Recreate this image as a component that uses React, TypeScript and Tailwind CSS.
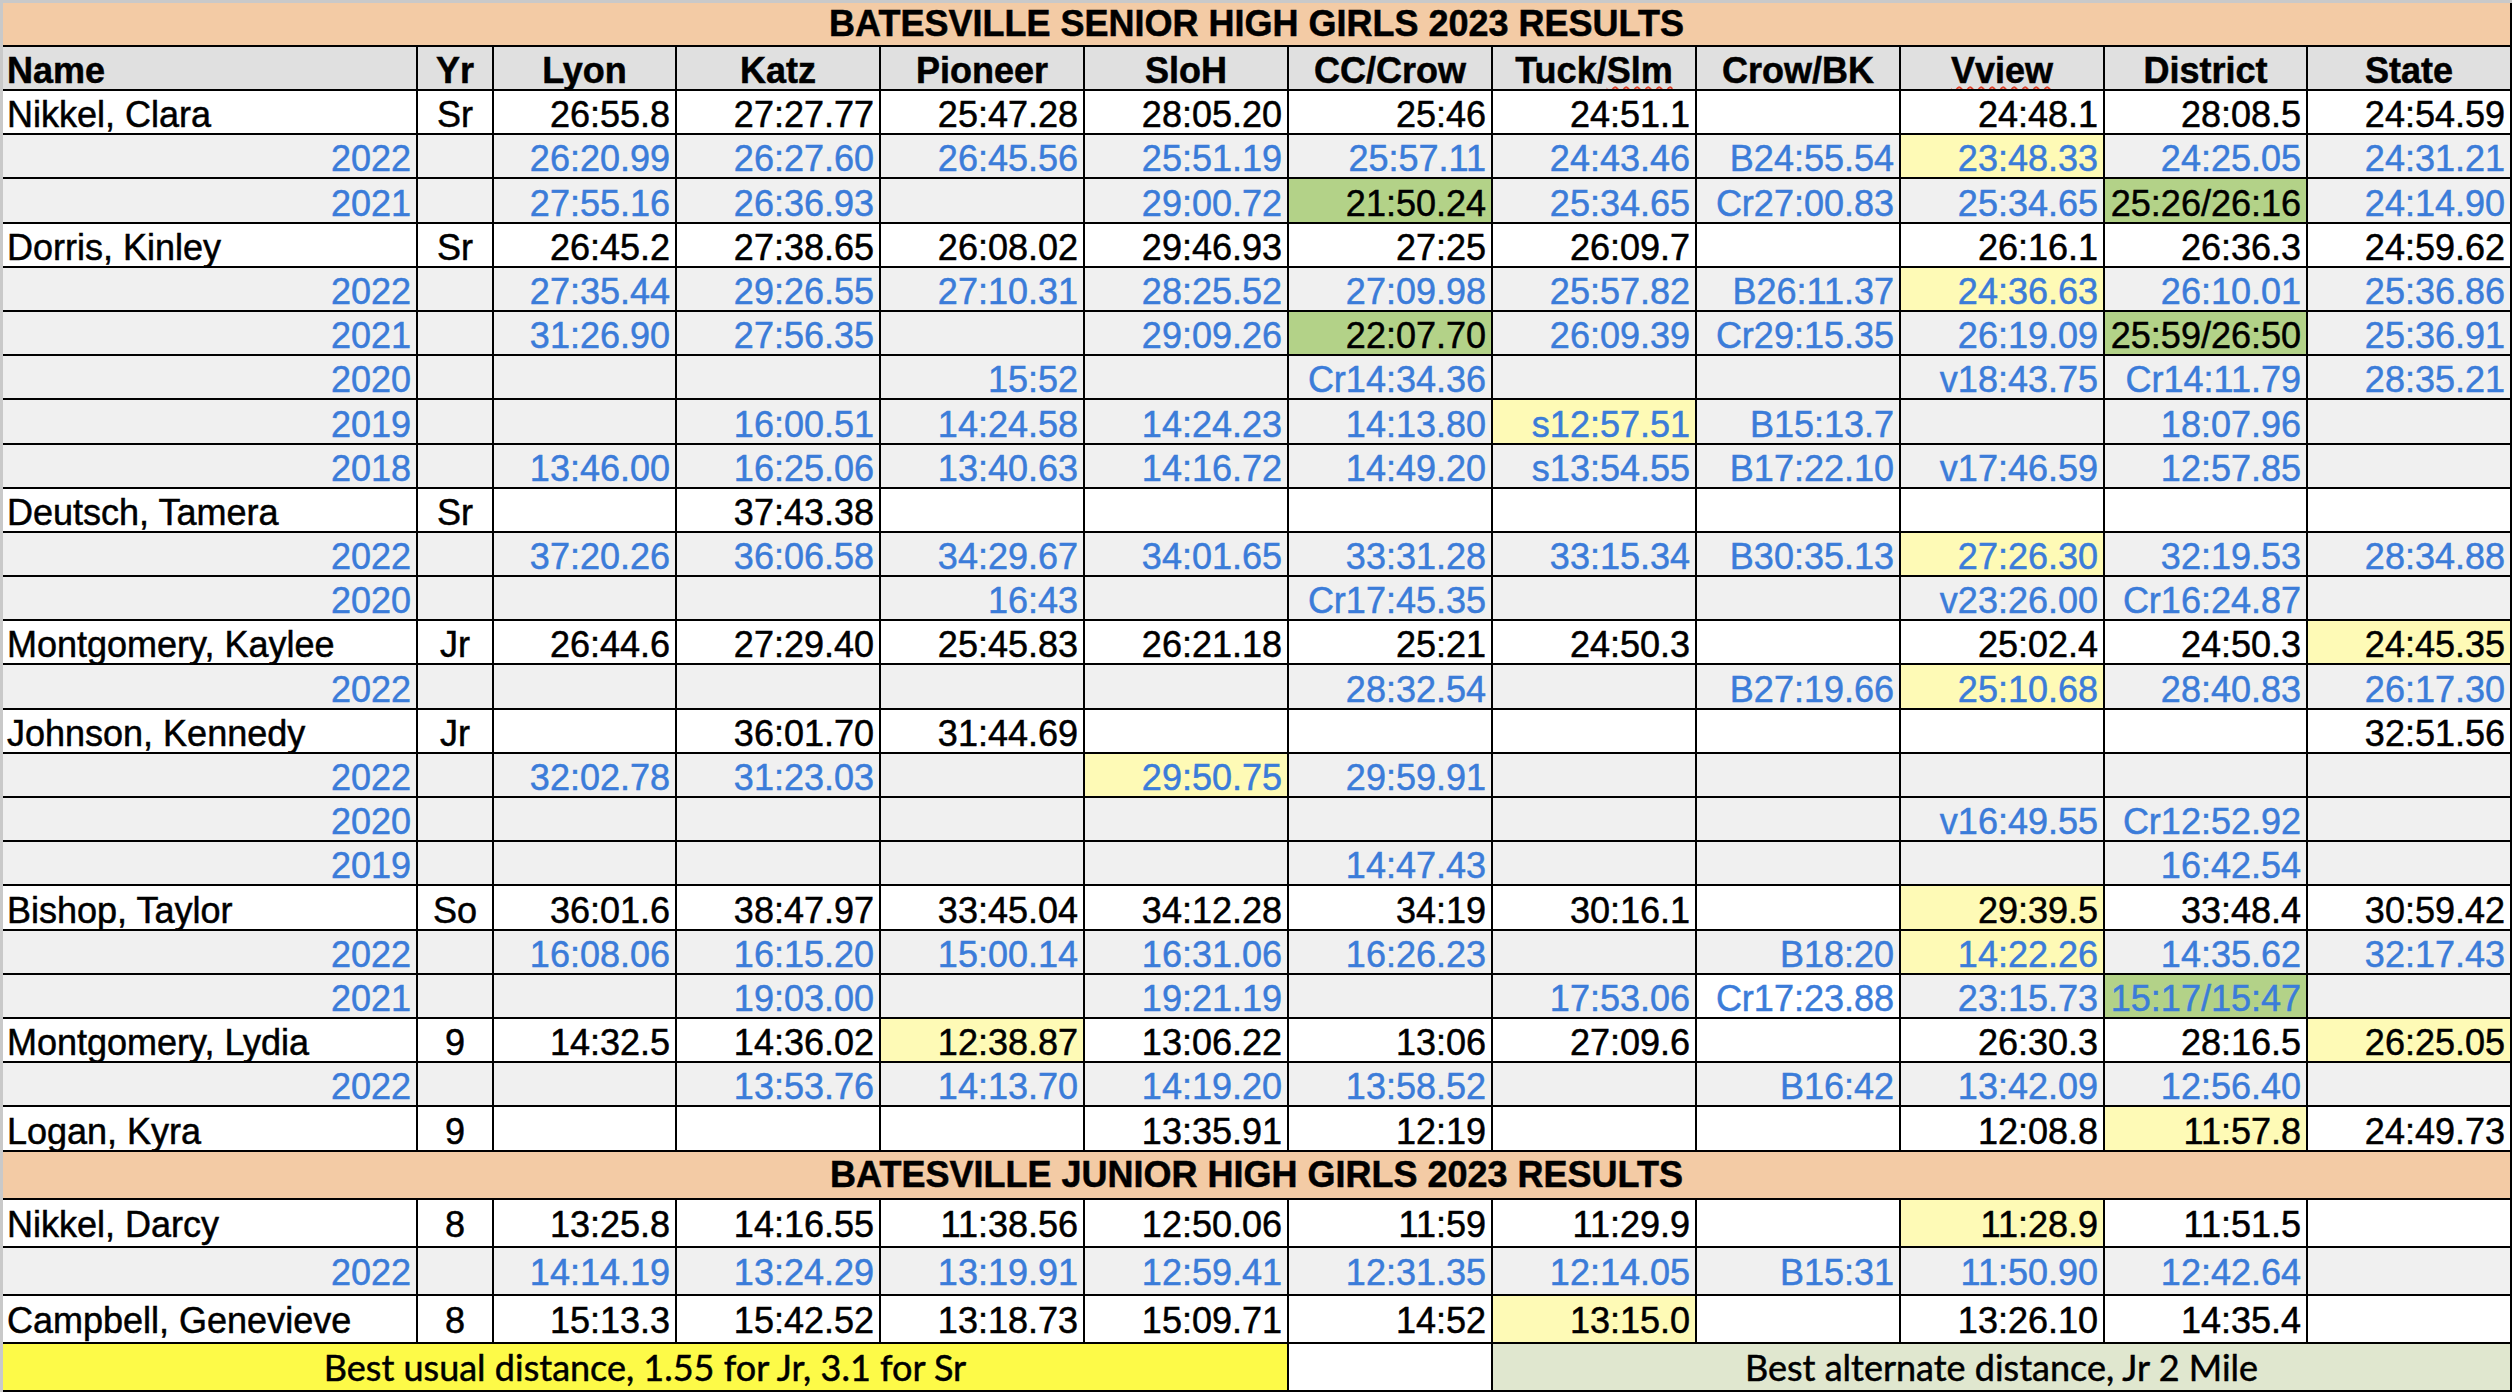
import React from "react";

type K = "y" | "g" | "gb" | "w";
type Val = string | { t: string; k: K };
type Row = { kind: "main" | "sub"; name: string; yr: string; vals: Val[] };

const Y = (t: string): Val => ({ t, k: "y" });
const G = (t: string): Val => ({ t, k: "g" });
const GB = (t: string): Val => ({ t, k: "gb" });
const W = (t: string): Val => ({ t, k: "w" });
const main = (name: string, yr: string, vals: Val[]): Row => ({ kind: "main", name, yr, vals });
const sub = (name: string, vals: Val[]): Row => ({ kind: "sub", name, yr: "", vals });

const senior: Row[] = [
  main("Nikkel, Clara", "Sr", ["26:55.8", "27:27.77", "25:47.28", "28:05.20", "25:46", "24:51.1", "", "24:48.1", "28:08.5", "24:54.59"]),
  sub("2022", ["26:20.99", "26:27.60", "26:45.56", "25:51.19", "25:57.11", "24:43.46", "B24:55.54", Y("23:48.33"), "24:25.05", "24:31.21"]),
  sub("2021", ["27:55.16", "26:36.93", "", "29:00.72", G("21:50.24"), "25:34.65", "Cr27:00.83", "25:34.65", G("25:26/26:16"), "24:14.90"]),
  main("Dorris, Kinley", "Sr", ["26:45.2", "27:38.65", "26:08.02", "29:46.93", "27:25", "26:09.7", "", "26:16.1", "26:36.3", "24:59.62"]),
  sub("2022", ["27:35.44", "29:26.55", "27:10.31", "28:25.52", "27:09.98", "25:57.82", "B26:11.37", Y("24:36.63"), "26:10.01", "25:36.86"]),
  sub("2021", ["31:26.90", "27:56.35", "", "29:09.26", G("22:07.70"), "26:09.39", "Cr29:15.35", "26:19.09", G("25:59/26:50"), "25:36.91"]),
  sub("2020", ["", "", "15:52", "", "Cr14:34.36", "", "", "v18:43.75", "Cr14:11.79", "28:35.21"]),
  sub("2019", ["", "16:00.51", "14:24.58", "14:24.23", "14:13.80", Y("s12:57.51"), "B15:13.7", "", "18:07.96", ""]),
  sub("2018", ["13:46.00", "16:25.06", "13:40.63", "14:16.72", "14:49.20", "s13:54.55", "B17:22.10", "v17:46.59", "12:57.85", ""]),
  main("Deutsch, Tamera", "Sr", ["", "37:43.38", "", "", "", "", "", "", "", ""]),
  sub("2022", ["37:20.26", "36:06.58", "34:29.67", "34:01.65", "33:31.28", "33:15.34", "B30:35.13", Y("27:26.30"), "32:19.53", "28:34.88"]),
  sub("2020", ["", "", "16:43", "", "Cr17:45.35", "", "", "v23:26.00", "Cr16:24.87", ""]),
  main("Montgomery, Kaylee", "Jr", ["26:44.6", "27:29.40", "25:45.83", "26:21.18", "25:21", "24:50.3", "", "25:02.4", "24:50.3", Y("24:45.35")]),
  sub("2022", ["", "", "", "", "28:32.54", "", "B27:19.66", Y("25:10.68"), "28:40.83", "26:17.30"]),
  main("Johnson, Kennedy", "Jr", ["", "36:01.70", "31:44.69", "", "", "", "", "", "", "32:51.56"]),
  sub("2022", ["32:02.78", "31:23.03", "", Y("29:50.75"), "29:59.91", "", "", "", "", ""]),
  sub("2020", ["", "", "", "", "", "", "", "v16:49.55", "Cr12:52.92", ""]),
  sub("2019", ["", "", "", "", "14:47.43", "", "", "", "16:42.54", ""]),
  main("Bishop, Taylor", "So", ["36:01.6", "38:47.97", "33:45.04", "34:12.28", "34:19", "30:16.1", "", Y("29:39.5"), "33:48.4", "30:59.42"]),
  sub("2022", ["16:08.06", "16:15.20", "15:00.14", "16:31.06", "16:26.23", "", "B18:20", Y("14:22.26"), "14:35.62", "32:17.43"]),
  sub("2021", ["", "19:03.00", "", "19:21.19", "", "17:53.06", W("Cr17:23.88"), "23:15.73", GB("15:17/15:47"), ""]),
  main("Montgomery, Lydia", "9", ["14:32.5", "14:36.02", Y("12:38.87"), "13:06.22", "13:06", "27:09.6", "", "26:30.3", "28:16.5", Y("26:25.05")]),
  sub("2022", ["", "13:53.76", "14:13.70", "14:19.20", "13:58.52", "", "B16:42", "13:42.09", "12:56.40", ""]),
  main("Logan, Kyra", "9", ["", "", "", "13:35.91", "12:19", "", "", "12:08.8", Y("11:57.8"), "24:49.73"]),
];

const junior: Row[] = [
  main("Nikkel, Darcy", "8", ["13:25.8", "14:16.55", "11:38.56", "12:50.06", "11:59", "11:29.9", "", Y("11:28.9"), "11:51.5", ""]),
  sub("2022", ["14:14.19", "13:24.29", "13:19.91", "12:59.41", "12:31.35", "12:14.05", "B15:31", "11:50.90", "12:42.64", ""]),
  main("Campbell, Genevieve", "8", ["15:13.3", "15:42.52", "13:18.73", "15:09.71", "14:52", Y("13:15.0"), "", "13:26.10", "14:35.4", ""]),
];

const GRID =
  "grid grid-cols-[415px_76px_183px_204px_204px_204px_204px_204px_204px_204px_203px_204px]";

const BLUE = "text-[#3b7cd9]";

function DataRow({ row, tall }: { row: Row; tall?: boolean }) {
  const isSub = row.kind === "sub";
  const rowBg = isSub ? "bg-[#f0f0f0]" : "bg-white";
  const rowText = isSub ? BLUE : "text-black";
  const h = tall ? "h-[48px] pb-[3px]" : "h-[44.2px]";
  const base = `flex items-end border-r-2 border-b-2 border-black whitespace-nowrap overflow-hidden leading-[36px] ${h}`;
  return (
    <div className={GRID}>
      <div className={`${base} ${rowBg} ${rowText} ${isSub ? "justify-end pr-[5px]" : "justify-start pl-[4px]"}`}>
        {row.name}
      </div>
      <div className={`${base} ${rowBg} ${rowText} justify-center`}>{row.yr}</div>
      {row.vals.map((v, i) => {
        let text = "";
        let bg = rowBg;
        let color = rowText;
        if (typeof v === "string") {
          text = v;
        } else {
          text = v.t;
          if (v.k === "y") bg = "bg-[#fefab6]";
          if (v.k === "g") {
            bg = "bg-[#b3d288]";
            color = "text-black";
          }
          if (v.k === "gb") bg = "bg-[#b3d288]";
          if (v.k === "w") bg = "bg-white";
        }
        return (
          <div key={i} className={`${base} ${bg} ${color} justify-end pr-[5px]`}>
            {text}
          </div>
        );
      })}
    </div>
  );
}

function TitleRow({ text, tall }: { text: string; tall?: boolean }) {
  return (
    <div
      className={`flex items-end justify-center w-[2509px] bg-[#f3cba5] border-r-2 border-b-2 border-black font-bold leading-[36px] text-black ${
        tall ? "h-[48px] pb-[5px]" : "h-[44px] pb-[3px]"
      }`}
    >
      {text}
    </div>
  );
}

const headers = ["Name", "Yr", "Lyon", "Katz", "Pioneer", "SloH", "CC/Crow", "Tuck/Slm", "Crow/BK", "Vview", "District", "State"];

function HeaderRow() {
  const base =
    "flex items-end h-[44px] bg-[#e0e0e0] border-r-2 border-b-2 border-black font-bold leading-[36px] whitespace-nowrap overflow-hidden";
  const wavy =
    "underline decoration-wavy decoration-[#e0452f] decoration-[2px] underline-offset-[3px] [text-decoration-skip-ink:none]";
  return (
    <div className={GRID}>
      {headers.map((h, i) => (
        <div key={h} className={`${base} ${i === 0 ? "justify-start pl-[4px]" : "justify-center"}`}>
          {h === "Vview" ? (
            <span className={wavy}>Vview</span>
          ) : h === "Tuck/Slm" ? (
            <span>
              Tuck/<span className={wavy}>Slm</span>
            </span>
          ) : (
            h
          )}
        </div>
      ))}
    </div>
  );
}

function FooterRow() {
  const base =
    "flex items-end justify-center h-[48px] pb-[5px] border-r-2 border-b-2 border-black font-['Lato',sans-serif] text-[36px] leading-[36px] whitespace-nowrap text-black";
  return (
    <div className="flex w-[2509px]">
      <div className={`${base} w-[1286px] bg-[#fdfa48]`}>Best usual distance, 1.55 for Jr, 3.1 for Sr</div>
      <div className={`${base} w-[204px] bg-white`}></div>
      <div className={`${base} w-[1019px] bg-[#e0e7cf]`}>Best alternate distance, Jr 2 Mile</div>
    </div>
  );
}

export default function App() {
  return (
    <div className="w-[2520px] h-[1394px] bg-white overflow-hidden font-['Liberation_Sans',Arial,sans-serif] text-[36px] [-webkit-text-stroke:0.5px_currentColor]">
      <div className="w-[2512px] border-t-[3px] border-l-[3px] border-[#c9c9c9]">
        <TitleRow text="BATESVILLE SENIOR HIGH GIRLS 2023 RESULTS" />
        <HeaderRow />
        {senior.map((r, i) => (
          <DataRow key={"s" + i} row={r} />
        ))}
        <TitleRow text="BATESVILLE JUNIOR HIGH GIRLS 2023 RESULTS" tall />
        {junior.map((r, i) => (
          <DataRow key={"j" + i} row={r} tall />
        ))}
        <FooterRow />
      </div>
    </div>
  );
}
